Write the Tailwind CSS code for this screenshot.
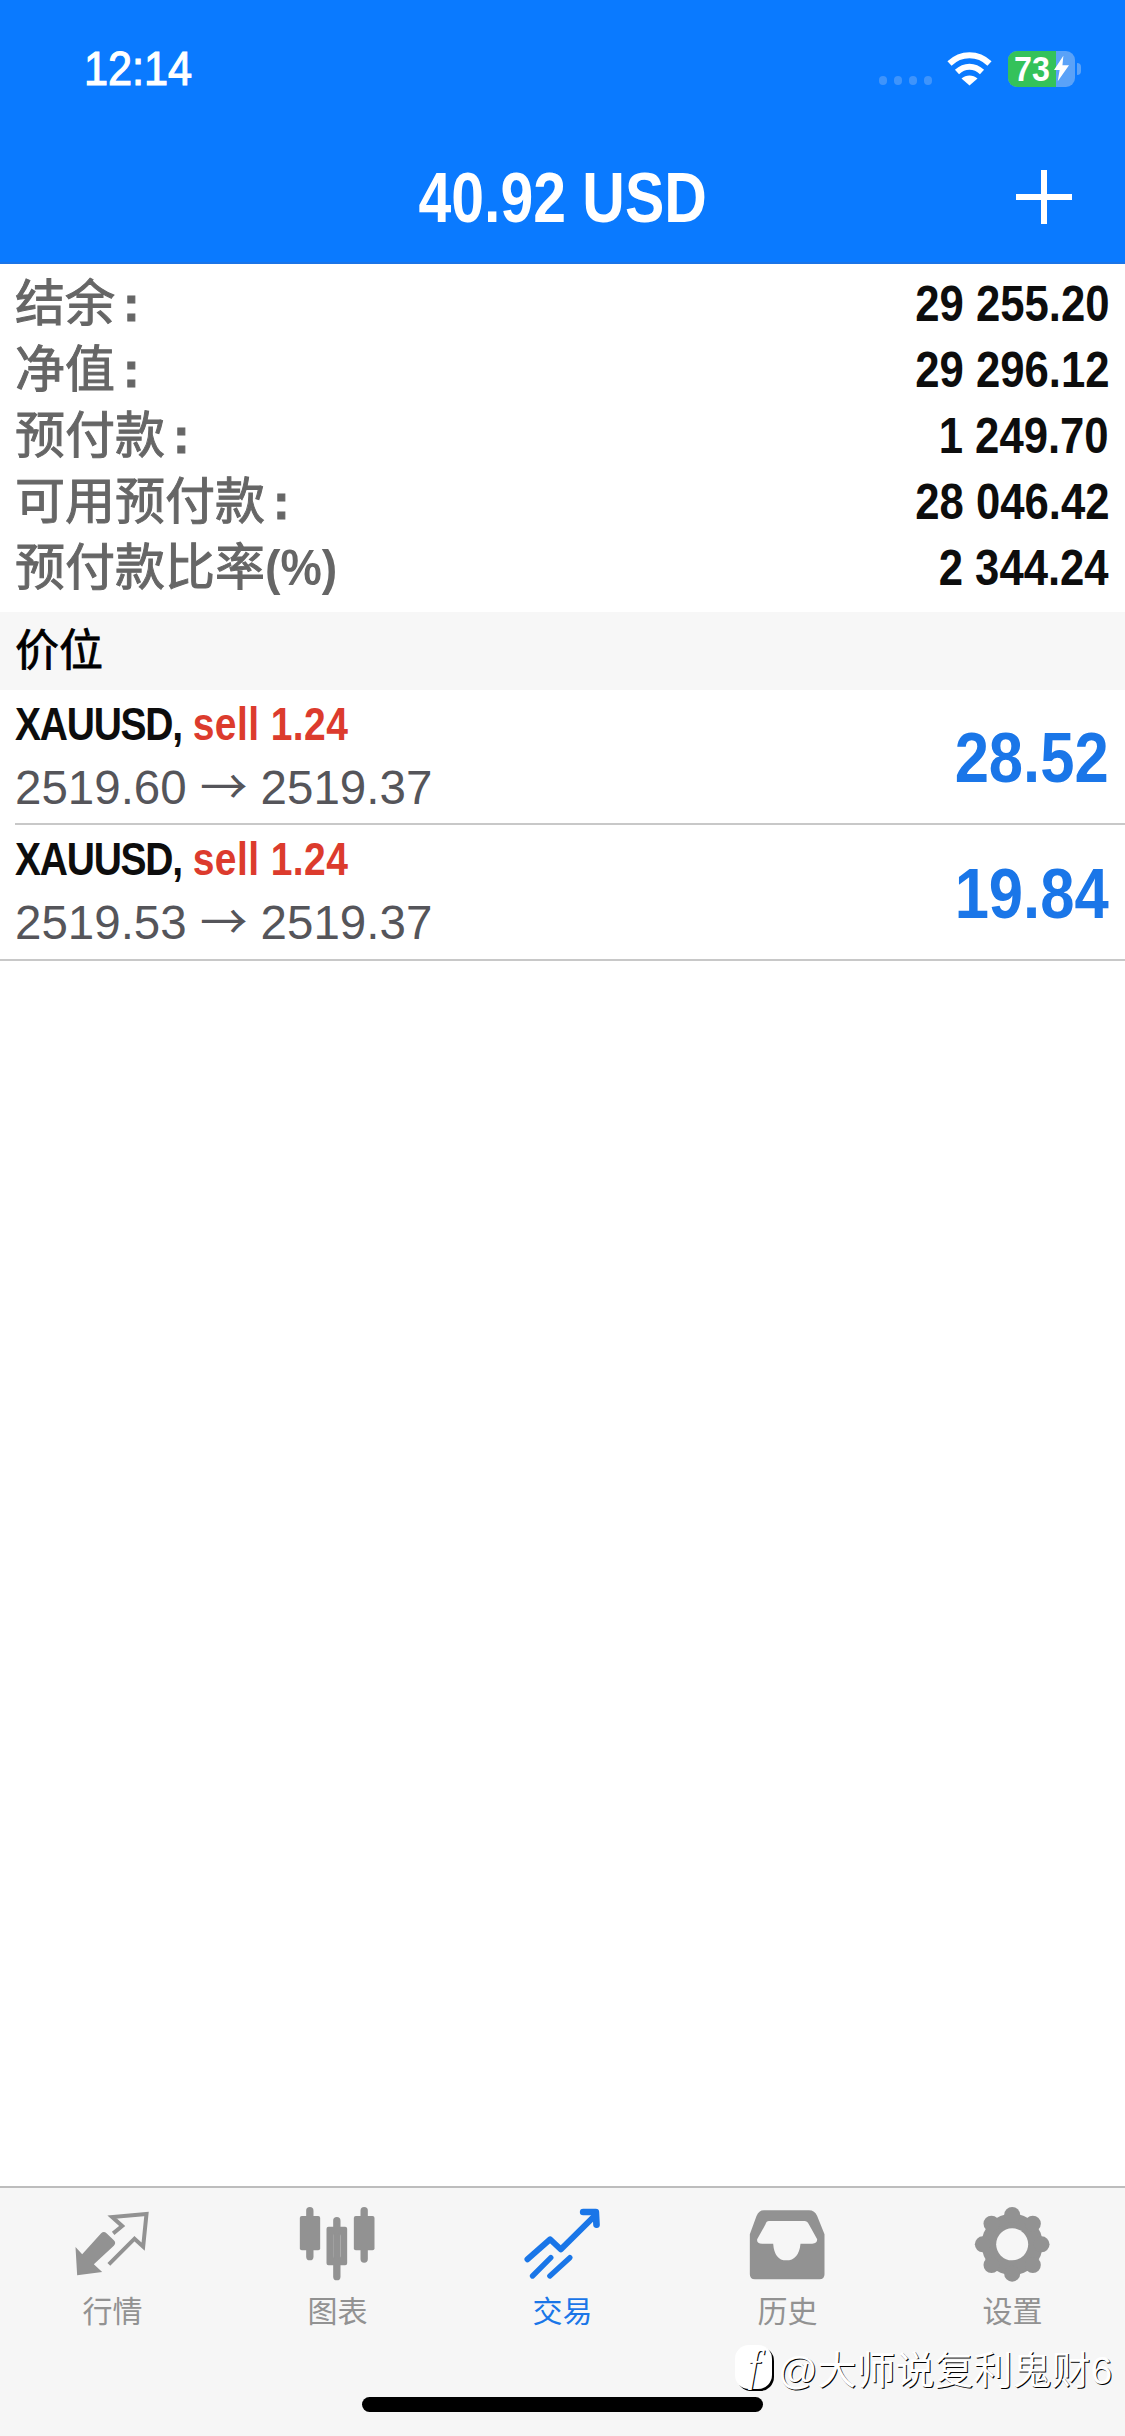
<!DOCTYPE html>
<html lang="zh-CN">
<head>
  <meta charset="UTF-8">
  <meta name="viewport" content="width=device-width, initial-scale=1.0">
  <title>交易</title>
  <script src="https://cdn.jsdelivr.net/npm/@tailwindcss/browser@4"></script>
</head>
<body class="bg-white font-['Liberation_Sans','Noto_Sans_CJK_SC',sans-serif]">
<div class="relative w-[1125px] h-[2436px] overflow-hidden flex flex-col">

  <!-- Header -->
  <header class="h-[264px] bg-[#0a7aff] text-white border-b-2 border-[#1a75e8] shrink-0">
    <div class="h-[130px] pt-[46px] pl-[84px] pr-[44px] flex items-start justify-between">
      <span class="inline-block origin-left scale-x-[.9] text-[48px] leading-[46px] [-webkit-text-stroke:1.2px_#fff]">12:14</span>
      <div class="flex items-start">
        <div class="flex gap-[7px] mt-[30px] mr-[15px]">
          <span class="w-[8px] h-[9px] rounded-full bg-[#3f94fb]"></span>
          <span class="w-[8px] h-[9px] rounded-full bg-[#3f94fb]"></span>
          <span class="w-[8px] h-[9px] rounded-full bg-[#3f94fb]"></span>
          <span class="w-[8px] h-[9px] rounded-full bg-[#3f94fb]"></span>
        </div>
        <svg class="w-[45px] h-[34px] mt-[6px] mr-[16px]" viewBox="0 0 45 34" fill="none" stroke="#fff" stroke-width="6">
          <path d="M2.5 11.5C14 .5 31 .5 42.5 11.5"/>
          <path d="M10 20c7.500-7 17.500-7 25 0"/>
          <path d="M22.500 33.500 14.500 26.500c4.500-4 11.500-4 16 0z" fill="#fff" stroke="none"/>
        </svg>
        <div class="relative w-[67px] h-[36px] mt-[5px] rounded-[9px] bg-[#5aa2f8]">
          <div class="w-[48px] h-full rounded-l-[9px] bg-[#34c25a]"></div>
          <span class="absolute left-[6px] top-0 inline-block origin-left scale-x-[.92] text-[35px] leading-[36px] font-bold">73</span>
          <svg class="absolute left-[46px] top-[4px] w-[15px] h-[27px]" viewBox="0 0 16 27" fill="#fff"><path d="M10 0 0 15h6L4 27 16 10H9z"/></svg>
        </div>
        <span class="w-[4px] h-[12px] mt-[17px] ml-[2px] rounded-r-full bg-[#5aa2f8]"></span>
      </div>
    </div>
    <div class="relative h-[132px] flex items-center justify-center pt-[2px]">
      <h1 class="inline-block scale-x-[.83] text-[71px] leading-none font-bold">40.92 USD</h1>
      <svg class="absolute left-[1016px] top-[40px] w-[56px] h-[54px]" viewBox="0 0 56 54" fill="#fff">
        <rect x="25" width="6" height="54"/><rect y="24" width="56" height="6"/>
      </svg>
    </div>
  </header>

  <main class="flex-1">
    <!-- Account summary -->
    <section class="pt-[7px] pb-[11px] pl-[15px] pr-[16px]">
      <div class="h-[66px] flex items-center justify-between">
        <span class="text-[50px] leading-none text-[#666] [-webkit-text-stroke:1px_#666]">结余<span class="ml-2 font-bold">:</span></span>
        <span class="inline-block origin-right scale-x-[.873] text-[50px] leading-none font-bold text-[#0d0d0d]">29 255.20</span>
      </div>
      <div class="h-[66px] flex items-center justify-between">
        <span class="text-[50px] leading-none text-[#666] [-webkit-text-stroke:1px_#666]">净值<span class="ml-2 font-bold">:</span></span>
        <span class="inline-block origin-right scale-x-[.873] text-[50px] leading-none font-bold text-[#0d0d0d]">29 296.12</span>
      </div>
      <div class="h-[66px] flex items-center justify-between">
        <span class="text-[50px] leading-none text-[#666] [-webkit-text-stroke:1px_#666]">预付款<span class="ml-2 font-bold">:</span></span>
        <span class="inline-block origin-right scale-x-[.873] text-[50px] leading-none font-bold text-[#0d0d0d]">1 249.70</span>
      </div>
      <div class="h-[66px] flex items-center justify-between">
        <span class="text-[50px] leading-none text-[#666] [-webkit-text-stroke:1px_#666]">可用预付款<span class="ml-2 font-bold">:</span></span>
        <span class="inline-block origin-right scale-x-[.873] text-[50px] leading-none font-bold text-[#0d0d0d]">28 046.42</span>
      </div>
      <div class="h-[66px] flex items-center justify-between">
        <span class="text-[50px] leading-none text-[#666] [-webkit-text-stroke:1px_#666]">预付款比率<span class="inline-block origin-left scale-x-[.93] font-bold text-[50px] [-webkit-text-stroke:0]">(%)</span></span>
        <span class="inline-block origin-right scale-x-[.873] text-[50px] leading-none font-bold text-[#0d0d0d]">2 344.24</span>
      </div>
    </section>

    <!-- Positions -->
    <div class="h-[78px] bg-[#f7f7f7] pl-[15px] flex items-center">
      <span class="text-[44px] leading-none text-black [-webkit-text-stroke:0.8px_#000]">价位</span>
    </div>

    <div class="ml-[15px] pr-[16px] h-[135px] border-b-2 border-[#c8c8c8] flex items-center justify-between">
      <div class="pb-[3px]">
        <div class="origin-left scale-x-[.83] whitespace-nowrap text-[47px] leading-[64px] font-bold"><span class="text-[#0d0d0d] tracking-[-1.500px]">XAUUSD,</span> <span class="text-[#dc3b2d] tracking-[0.5px]">sell 1.24</span></div>
        <div class="-mt-[3px] text-[47.500px] leading-[62px] text-[#55555a]">2519.60 <span class="font-['Noto_Sans_CJK_SC',sans-serif]">→</span> 2519.37</div>
      </div>
      <span class="inline-block origin-right scale-x-[.867] pt-[2px] text-[71px] leading-none font-bold text-[#1a76e8]">28.52</span>
    </div>
    <div class="pl-[15px] pr-[16px] h-[136px] border-b-2 border-[#c8c8c8] flex items-center justify-between">
      <div class="pb-[3px]">
        <div class="origin-left scale-x-[.83] whitespace-nowrap text-[47px] leading-[64px] font-bold"><span class="text-[#0d0d0d] tracking-[-1.500px]">XAUUSD,</span> <span class="text-[#dc3b2d] tracking-[0.5px]">sell 1.24</span></div>
        <div class="-mt-[3px] text-[47.500px] leading-[62px] text-[#55555a]">2519.53 <span class="font-['Noto_Sans_CJK_SC',sans-serif]">→</span> 2519.37</div>
      </div>
      <span class="inline-block origin-right scale-x-[.867] pt-[2px] text-[71px] leading-none font-bold text-[#1a76e8]">19.84</span>
    </div>
  </main>

  <!-- Tab bar -->
  <nav class="h-[250px] shrink-0 bg-[#f6f6f6] border-t-2 border-[#bdbdbd] grid grid-cols-5 pt-[8px]">
    <div class="flex flex-col items-center text-[#929292]">
      <svg class="w-[100px] h-[90px]" viewBox="7.500 0 300 270">
        <path fill="#929292" d="M45 153 65 175 122 112Q130 104 138 112L160 133Q168 141 160 149L100 205 125 228 50 238Z"/>
        <path fill="none" stroke="#929292" stroke-width="12" d="M158 112 185 90 155 63 258 54 248 152 222 128 145 205"/>
      </svg>
      <span class="text-[30px] leading-[36px] mt-[8px]">行情</span>
    </div>
    <div class="flex flex-col items-center text-[#929292]">
      <svg class="w-[100px] h-[90px]" viewBox="7.500 0 300 270" fill="#929292">
        <rect x="62" y="33" width="22" height="160" rx="11"/>
        <rect x="43" y="60" width="61" height="103" rx="6"/>
        <rect x="225" y="33" width="22" height="167" rx="11"/>
        <rect x="205" y="60" width="62" height="103" rx="6"/>
        <rect x="143" y="63" width="22" height="190" rx="11"/>
        <path fill-rule="evenodd" d="M129 92H179Q185 92 185 98V202Q185 208 179 208H129Q123 208 123 202V98Q123 92 129 92ZM149 113Q143 113 143 119V181Q143 187 149 187H159Q165 187 165 181V119Q165 113 159 113Z"/>
      </svg>
      <span class="text-[30px] leading-[36px] mt-[8px]">图表</span>
    </div>
    <div class="flex flex-col items-center text-[#1a76e8]">
      <svg class="w-[100px] h-[90px]" viewBox="1.500 0 300 270" fill="none" stroke="#1a76e8" stroke-linecap="round" stroke-linejoin="round">
        <path stroke-width="18" d="M45 190 113 130 145 160 248 58"/>
        <path stroke-width="20" d="M212 48H250L252 86"/>
        <path stroke-width="16" d="M60 240 115 185M112 240 172 185"/>
      </svg>
      <span class="text-[30px] leading-[36px] mt-[8px]">交易</span>
    </div>
    <div class="flex flex-col items-center text-[#929292]">
      <svg class="w-[100px] h-[90px]" viewBox="352.500 75 300 270" fill="#929292">
        <path fill-rule="evenodd" d="M430 118H565Q583 118 590 135L612 190V310Q612 325 597 325H403Q388 325 388 310V190L408 135Q415 118 430 118ZM445 150Q438 150 435 160L410 205Q408 218 425 218H458Q462 268 497 268Q535 268 540 218H575Q590 218 590 205L565 160Q560 150 552 150Z"/>
      </svg>
      <span class="text-[30px] leading-[36px] mt-[8px]">历史</span>
    </div>
    <div class="flex flex-col items-center text-[#929292]">
      <svg class="w-[100px] h-[90px]" viewBox="1027.500 75 300 270" fill="#929292">
        <circle cx="1175" cy="220" r="92"/>
        <circle cx="1175" cy="132" r="24"/><circle cx="1175" cy="308" r="24"/>
        <circle cx="1087" cy="220" r="24"/><circle cx="1263" cy="220" r="24"/>
        <circle cx="1113" cy="158" r="24"/><circle cx="1237" cy="158" r="24"/>
        <circle cx="1113" cy="282" r="24"/><circle cx="1237" cy="282" r="24"/>
        <circle cx="1175" cy="220" r="48" fill="#f6f6f6"/>
      </svg>
      <span class="text-[30px] leading-[36px] mt-[8px]">设置</span>
    </div>
  </nav>

  <!-- Home indicator -->
  <div class="absolute left-[362px] top-[2397px] w-[401px] h-[15px] rounded-full bg-black"></div>

  <!-- Watermark -->
  <div class="absolute left-[735px] top-[2345px] w-[37px] h-[44px] rounded-[14px] bg-white shadow-[2px_2px_0_#000] flex items-center justify-center">
    <span class="text-[44px] leading-none italic font-['Liberation_Serif',serif] text-white [text-shadow:1px_1px_0_#000]">f</span>
  </div>
  <div class="absolute left-[778px] top-[2349px] text-[39px] leading-[44px] text-white whitespace-nowrap [text-shadow:1px_1px_0_#000]">@大师说复利鬼财6</div>
</div>
</body>
</html>
